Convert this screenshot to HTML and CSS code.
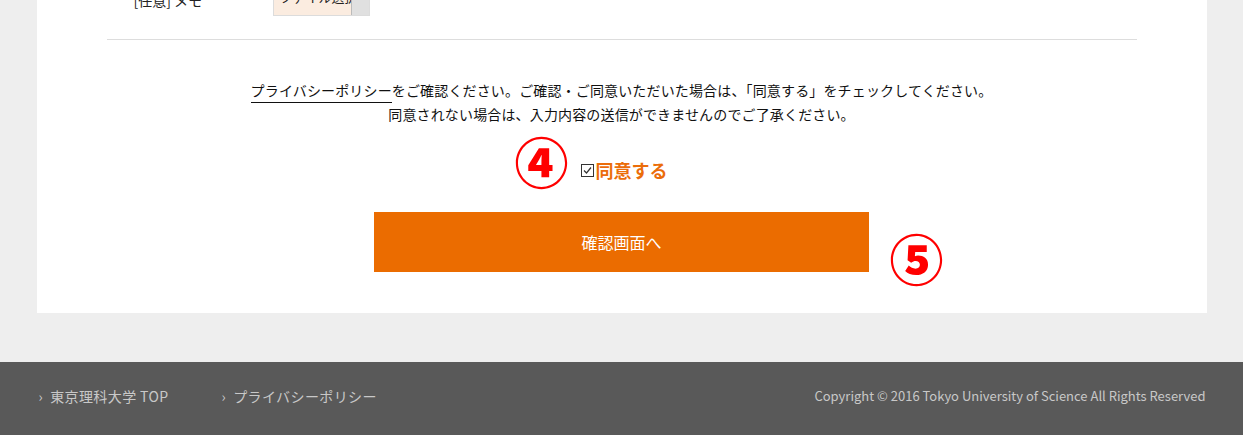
FILE: index.html
```html
<!DOCTYPE html>
<html>
<head>
<meta name="viewport" content="width=device-width, initial-scale=1">
<link rel="stylesheet" href="styles.css">
</head>
<body>

<div class="page">
  <div class="panel">
    <div class="field-row">
      <div class="field-label">[任意] メモ</div>
      <div class="field-input">
        <span class="field-value">ファイル選択</span>
        <span class="field-btn"></span>
      </div>
    </div>

    <hr class="divider">

    <p class="notice">
      <a class="policy-link" href="#">プライバシーポリシー</a>をご確認ください。ご確認・ご同意いただいた場合は、「同意する」をチェックしてください。<br>
      同意されない場合は、入力内容の送信ができませんのでご了承ください。
    </p>

    <div class="agree-row">
      <label class="agree">
        <span class="mark mark-4">④</span>
        <svg class="check" width="13" height="13" viewBox="0 0 13 13">
          <rect x="0.5" y="0.5" width="12" height="12" fill="#fff" stroke="#333"/>
          <polyline points="3,6.5 5.5,9 10,3.5" fill="none" stroke="#333" stroke-width="1.2"/>
        </svg>
        <span class="agree-text">同意する</span>
      </label>
    </div>

    <div class="submit-row">
      <div class="submit">確認画面へ</div>
      <span class="mark mark-5">⑤</span>
    </div>
  </div>
</div>

<div class="footer">
  <div class="footer-inner">
    <div class="footer-links">
      <a href="#">東京理科大学 TOP</a>
      <a href="#">プライバシーポリシー</a>
    </div>
    <div class="copyright">Copyright © 2016 Tokyo University of Science All Rights Reserved</div>
  </div>
</div>

</body>
</html>
```

FILE: styles.css
```css
* {
  box-sizing: border-box;
}

body {
  margin: 0;
  background-color: #eeeeee;
  font-family: "Noto Sans CJK JP", "Noto Sans", sans-serif;
  color: #222;
  font-size: 14px;
  overflow: hidden;
}

.page {
  width: 1170px;
  margin: 0 auto;
}

.panel {
  background-color: #fff;
  padding: 0 70px 41px;
}

.field-row {
  display: flex;
  align-items: flex-end;
  height: 36px;
  margin-top: -20px;
}

.field-label {
  width: 166px;
  padding-left: 27px;
  margin-bottom: 8px;
  font-size: 14px;
  line-height: 16px;
}

.field-input {
  display: flex;
  width: 97px;
  height: 36px;
  border: 1px solid #dcdcdc;
  background-color: #fbece0;
}

.field-value {
  flex: 1;
  overflow: hidden;
  white-space: nowrap;
  font-size: 13px;
  line-height: 32px;
  padding-left: 6px;
  color: #222;
}

.field-btn {
  width: 18px;
  background-color: #e0e0e0;
  border-left: 1px solid #bbb;
}

.divider {
  border: none;
  border-top: 1px solid #dddddd;
  margin: 23px 0 0;
}

.notice {
  margin: 38px 0 0;
  text-align: center;
  font-size: 14px;
  line-height: 24px;
  letter-spacing: 0.15px;
  color: #111;
}

.policy-link {
  color: #111;
  text-decoration: none;
  border-bottom: 1px solid #111;
  padding-bottom: 2px;
}

.agree-row {
  display: flex;
  justify-content: center;
  align-items: center;
  height: 60px;
  margin-top: 14px;
  padding-left: 5px;
}

.mark {
  color: #ff0000;
  font-size: 54px;
  font-weight: 900;
  line-height: 60px;
}

.agree {
  position: relative;
  display: flex;
  align-items: center;
  cursor: pointer;
}

.mark-4 {
  position: absolute;
  right: 100%;
  top: -26px;
  margin-right: 12px;
}

.check {
  margin-right: 2px;
}

.agree-text {
  color: #eb6d0a;
  font-size: 18px;
  font-weight: bold;
}

.submit-row {
  position: relative;
  display: flex;
  justify-content: center;
  margin-top: 12px;
}

.submit {
  width: 495px;
  height: 60px;
  line-height: 60px;
  text-align: center;
  background-color: #eb6c00;
  color: #fff;
  font-size: 16px;
  cursor: pointer;
}

.mark-5 {
  position: absolute;
  left: 783px;
  top: 16px;
}

.footer {
  margin-top: 49px;
  background-color: #595959;
  height: 80px;
}

.footer-inner {
  width: 1170px;
  margin: 0 auto;
  display: flex;
  justify-content: space-between;
  align-items: center;
  padding: 25px 1px 0 2px;
  font-size: 14px;
  line-height: 18px;
  color: #c8c8c8;
}

.footer-links {
  display: flex;
  gap: 53px;
}

.footer-links a {
  color: #c8c8c8;
  text-decoration: none;
  letter-spacing: 0.4px;
}

.footer-links a:before {
  content: "\203A";
  margin-right: 7px;
}

.copyright {
  font-size: 13px;
}
```
